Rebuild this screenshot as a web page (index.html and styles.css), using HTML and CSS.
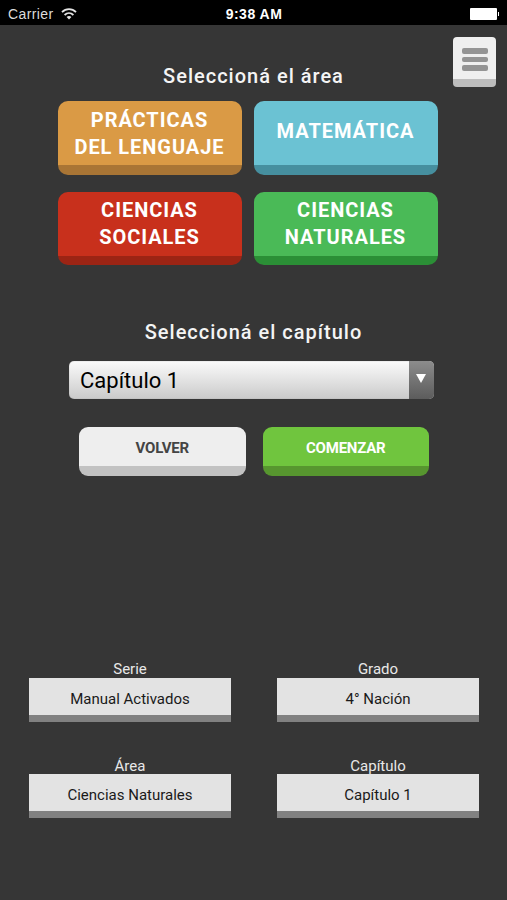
FILE: index.html
```html
<!DOCTYPE html>
<html lang="es">
<head>
    <title>Seleccioná el área</title>
    <meta charset="utf-8">
    <meta name="viewport" content="width=device-width, initial-scale=1">
    <link rel="stylesheet" href="styles.css">
</head>
<body>
    <header class="status-bar">
        <div class="carrier">
            <span>Carrier</span>
            <svg class="wifi" width="16" height="12" viewBox="0 0 16 12" fill="none" stroke="#e4e4e4" stroke-width="1.8">
                <path d="M1 4.2 C5 0.2 11 0.2 15 4.2"/>
                <path d="M3.6 7 C6.2 4.5 9.8 4.5 12.4 7"/>
                <path d="M5.6 9 C7 7.6 9 7.6 10.4 9 L8 11.4 Z" fill="#e4e4e4" stroke="none"/>
            </svg>
        </div>
        <span class="clock">9:38 AM</span>
        <div class="battery"></div>
    </header>

    <main class="main">
        <button type="button" class="menu-btn" aria-label="Menú">
            <span></span>
            <span></span>
            <span></span>
        </button>

        <h1 class="title">Seleccioná el área</h1>
        <div class="areas">
            <button type="button" class="area two-lines lengua">PRÁCTICAS<br>DEL LENGUAJE</button>
            <button type="button" class="area matematica">MATEMÁTICA</button>
            <button type="button" class="area two-lines sociales">CIENCIAS<br>SOCIALES</button>
            <button type="button" class="area two-lines naturales">CIENCIAS<br>NATURALES</button>
        </div>

        <h2 class="title title-chapter">Seleccioná el capítulo</h2>
        <div class="select">
            <span class="select-value">Capítulo 1</span>
            <span class="select-arrow"></span>
        </div>

        <div class="actions">
            <button type="button" class="btn btn-back">VOLVER</button>
            <button type="button" class="btn btn-start">COMENZAR</button>
        </div>

        <div class="summary">
            <div class="item">
                <div class="label">Serie</div>
                <div class="value">Manual Activados</div>
            </div>
            <div class="item">
                <div class="label">Grado</div>
                <div class="value">4° Nación</div>
            </div>
            <div class="item">
                <div class="label">Área</div>
                <div class="value">Ciencias Naturales</div>
            </div>
            <div class="item">
                <div class="label">Capítulo</div>
                <div class="value">Capítulo 1</div>
            </div>
        </div>
    </main>
</body>
</html>
```
FILE: styles.css
```css
* {
    box-sizing: border-box;
}

body {
    font-family: Roboto, Arial, sans-serif;
    color: white;
    background-color: #363636;
    margin: 0;
    height: 900px;
    overflow: hidden;
}

button {
    font-family: inherit;
    border: none;
    padding: 0;
    cursor: pointer;
}

/* Status bar */
.status-bar {
    display: grid;
    grid-template-columns: 1fr auto 1fr;
    align-items: center;
    height: 25px;
    padding: 2px 7px 0 8px;
    background: black;
    font-family: "Liberation Sans", Arial, sans-serif;
    font-size: 14px;
}

.carrier {
    display: flex;
    align-items: center;
    gap: 7px;
    color: #dcdcdc;
    letter-spacing: 0.4px;
}

.clock {
    font-weight: bold;
    letter-spacing: 0.5px;
}

.battery {
    position: relative;
    justify-self: end;
    width: 27px;
    height: 12px;
    margin-right: 3px;
    border-radius: 1px;
    background: white;
}

.battery:after {
    content: "";
    position: absolute;
    right: -2px;
    top: 4px;
    width: 1px;
    height: 4px;
    background: white;
}

/* Content */
.main {
    position: relative;
    padding-top: 37px;
}

.menu-btn {
    position: absolute;
    top: 12px;
    right: 11px;
    display: flex;
    flex-direction: column;
    align-items: center;
    gap: 3px;
    width: 43px;
    height: 50px;
    padding-top: 11px;
    border-radius: 4px;
    background: linear-gradient(to top, #bdbdbd 8px, #efefef 8px);
}

.menu-btn span {
    width: 26px;
    height: 5.5px;
    border-radius: 2px;
    background: #949494;
}

.title {
    margin: 0;
    font-size: 20px;
    font-weight: 500;
    line-height: 28px;
    letter-spacing: 1px;
    text-align: center;
    color: #f4f4f4;
}

.areas {
    display: grid;
    grid-template-columns: 184px 184px;
    gap: 17px 12px;
    justify-content: center;
    margin: 11px 12px 0 0;
}

.area {
    height: 73.5px;
    padding-bottom: 13px;
    border-radius: 10px;
    color: white;
    font-size: 20px;
    font-weight: bold;
    line-height: 27px;
    letter-spacing: 0.95px;
}

.two-lines {
    padding-bottom: 8px;
}

.lengua {
    background: linear-gradient(to top, #a97535 9.5px, #da9a45 9.5px);
}

.matematica {
    background: linear-gradient(to top, #468f9f 9.5px, #6bc2d3 9.5px);
}

.sociales {
    background: linear-gradient(to top, #9c2414 9.5px, #c8301c 9.5px);
}

.naturales {
    background: linear-gradient(to top, #2b8f36 9.5px, #4aba57 9.5px);
}

.title-chapter {
    margin-top: 53px;
}

.select {
    display: flex;
    width: 365px;
    height: 38px;
    margin: 15px 0 0 69px;
    border-radius: 5px;
    overflow: hidden;
    background: linear-gradient(#fbfbfb, #cacaca);
    box-shadow: inset 0 0 1px #888;
}

.select-value {
    flex: 1;
    padding-left: 11px;
    color: black;
    font-size: 22px;
    line-height: 39px;
}

.select-arrow {
    display: flex;
    justify-content: center;
    width: 25px;
    padding: 13px 2px 0 0;
    background: linear-gradient(#8c8c8c, #5c5c5c);
}

.select-arrow:after {
    content: "";
    height: 0;
    border-width: 9px 5.5px 0 5.5px;
    border-style: solid;
    border-color: white transparent transparent transparent;
}

.actions {
    display: flex;
    gap: 17px;
    margin: 28px 0 0 79px;
}

.btn {
    width: 166.5px;
    height: 49px;
    padding-bottom: 8px;
    border-radius: 9px;
    font-size: 15px;
    font-weight: bold;
    letter-spacing: -0.2px;
}

.btn-back {
    color: #444;
    background: linear-gradient(to top, #c2c2c2 10px, #eee 10px);
}

.btn-start {
    color: white;
    background: linear-gradient(to top, #57962f 10px, #70c53e 10px);
}

.summary {
    display: grid;
    grid-template-columns: 202px 202px;
    gap: 34px 46px;
    margin: 183px 0 0 29px;
    font-size: 15px;
    text-align: center;
}

.label {
    height: 18.5px;
    line-height: 20px;
    color: #e8e8e8;
}

.value {
    height: 44px;
    line-height: 42px;
    color: #1a1a1a;
    background: #e3e3e3;
    border-bottom: 7px solid #818181;
}
```
